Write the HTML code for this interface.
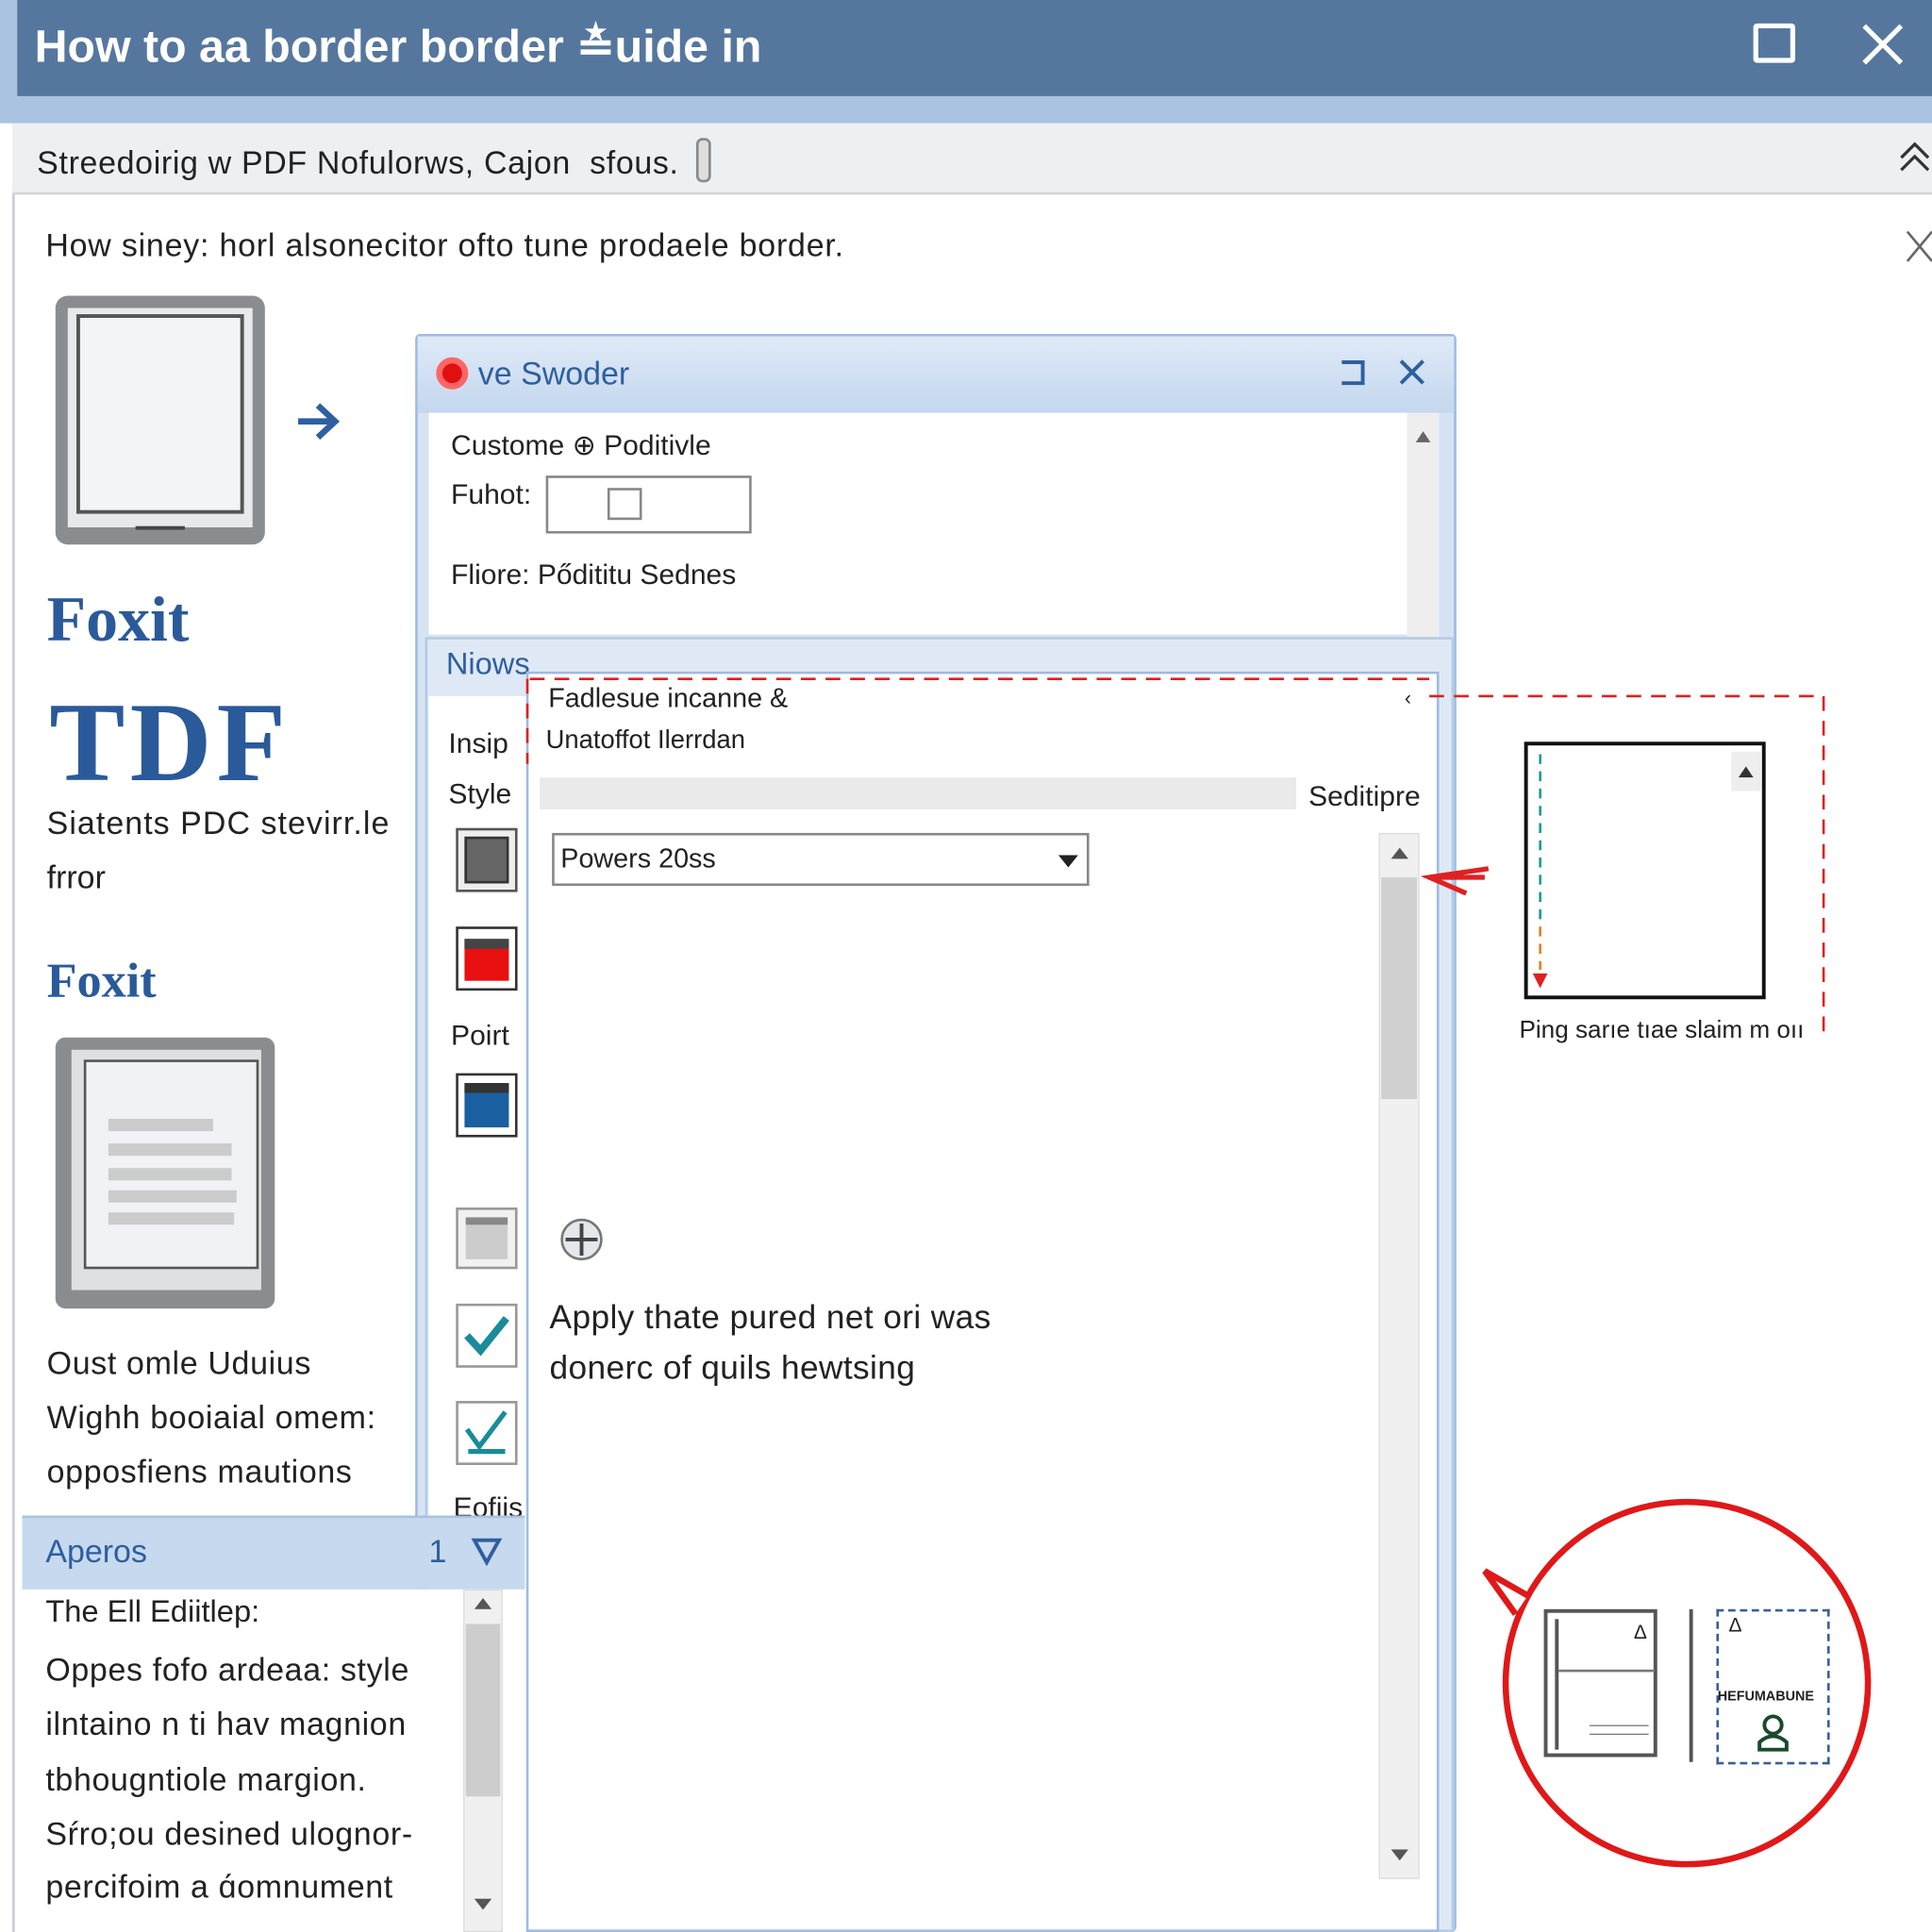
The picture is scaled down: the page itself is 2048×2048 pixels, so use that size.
<!DOCTYPE html>
<html><head><meta charset="utf-8"><style>
*{margin:0;padding:0;box-sizing:border-box}
html,body{width:2048px;height:2048px;overflow:hidden;background:#fff}
#w{width:1568px;height:1568px;transform:scale(1.306122);transform-origin:0 0;position:relative;font-family:"Liberation Sans",sans-serif;color:#222;background:#fff}
.a{position:absolute}
.t{position:absolute;white-space:nowrap;font-size:26px;line-height:1}
</style></head><body><div id="w">
<!-- title -->
<div class="a" style="left:0;top:0;width:1568px;height:100px;background:#a9c3e0"></div>
<div class="a" style="left:14px;top:0;width:1554px;height:78px;background:#55779e"></div>
<div class="t" style="left:28px;top:19px;font-size:37px;font-weight:bold;color:#fff">How to aa border border ≛uide in</div>
<div class="a" style="left:1423px;top:19px;width:34px;height:32px;border:4px solid #fff;border-radius:3px"></div>
<svg class="a" style="left:1510px;top:18px" width="36" height="36"><path d="M3 3L33 33M33 3L3 33" stroke="#fff" stroke-width="4"/></svg>
<div class="a" style="left:10px;top:100px;width:1558px;height:58px;background:#eeeff1;border-bottom:2px solid #d4d6da"></div>
<div class="t" style="left:30px;top:119px;letter-spacing:0.5px">Streedoirig w PDF Nofulorws, Cajon &nbsp;sfous.</div>
<div class="a" style="left:565px;top:112px;width:12px;height:36px;border:2px solid #888;border-radius:5px;background:#ddd"></div>
<svg class="a" style="left:1540px;top:112px" width="28" height="30"><path d="M3 16L14 5L25 16M3 26L14 15L25 26" stroke="#333" stroke-width="2.5" fill="none"/></svg>
<div class="a" style="left:10px;top:158px;width:2px;height:1410px;background:#c8ccd2"></div>
<div class="t" style="left:37px;top:186px;letter-spacing:0.6px">How siney: horl alsonecitor ofto tune prodaele border.</div>
<svg class="a" style="left:1545px;top:185px" width="23" height="32"><path d="M3 3L23 27M23 3L3 27" stroke="#666" stroke-width="2"/></svg>
<!-- tablet -->
<div class="a" style="left:45px;top:240px;width:170px;height:202px;background:#8a8c90;border-radius:10px"></div>
<div class="a" style="left:55px;top:250px;width:150px;height:178px;background:#e8e9ec"></div>
<div class="a" style="left:62px;top:255px;width:136px;height:162px;border:3px solid #555;background:#f3f4f6"></div>
<div class="a" style="left:110px;top:427px;width:40px;height:3px;background:#444"></div>
<svg class="a" style="left:238px;top:325px" width="40" height="34"><path d="M4 17H34M20 4L34 17L20 30" stroke="#2e5fa0" stroke-width="5" fill="none"/></svg>
<div class="t" style="left:38px;top:478px;font-family:'Liberation Serif',serif;font-weight:bold;font-size:52px;color:#2a5a9a">Foxit</div>
<div class="t" style="left:40px;top:556px;font-family:'Liberation Serif',serif;font-weight:bold;font-size:92px;color:#2a5a9a;letter-spacing:4px">TDF</div>
<div class="t" style="left:38px;top:655px;letter-spacing:0.8px">Siatents PDC stevirr.le</div>
<div class="t" style="left:38px;top:699px">frror</div>
<div class="t" style="left:38px;top:776px;font-family:'Liberation Serif',serif;font-weight:bold;font-size:40px;color:#2a5a9a">Foxit</div>
<div class="a" style="left:45px;top:842px;width:178px;height:220px;background:#8a8c90;border-radius:8px"></div>
<div class="a" style="left:58px;top:852px;width:154px;height:195px;background:#dfe0e3"></div>
<div class="a" style="left:68px;top:860px;width:142px;height:170px;border:2px solid #555;background:#f1f2f4"></div>
<div class="a" style="left:88px;top:908px;width:85px;height:10px;background:#ccc"></div>
<div class="a" style="left:88px;top:928px;width:100px;height:10px;background:#ccc"></div>
<div class="a" style="left:88px;top:948px;width:100px;height:10px;background:#ccc"></div>
<div class="a" style="left:88px;top:966px;width:104px;height:10px;background:#ccc"></div>
<div class="a" style="left:88px;top:984px;width:102px;height:10px;background:#ccc"></div>
<div class="t" style="left:38px;top:1093px;letter-spacing:0.5px">Oust omle Uduius</div>
<div class="t" style="left:38px;top:1137px;letter-spacing:0.5px">Wighh booiaial omem:</div>
<div class="t" style="left:38px;top:1181px;letter-spacing:0.5px">opposfiens mautions</div>
<!-- dialog -->
<div class="a" style="left:337px;top:271px;width:845px;height:1297px;background:#d6e3f2;border:2px solid #9fbbe0;border-radius:4px"></div>
<div class="a" style="left:339px;top:273px;width:841px;height:62px;background:linear-gradient(#dfeaf7,#c4d7ee)"></div>
<div class="a" style="left:354px;top:290px;width:26px;height:26px;border-radius:50%;background:#e01010;border:5px solid #f66"></div>
<div class="t" style="left:388px;top:290px;color:#2e5fa0">ve Swoder</div>
<svg class="a" style="left:1086px;top:290px" width="24" height="24"><path d="M3 4H20V21H3" stroke="#2e5fa0" stroke-width="3" fill="none"/></svg>
<svg class="a" style="left:1134px;top:290px" width="24" height="24"><path d="M3 3L21 21M21 3L3 21" stroke="#2e5fa0" stroke-width="3"/></svg>
<div class="a" style="left:348px;top:335px;width:794px;height:180px;background:#fff"></div>
<div class="a" style="left:1142px;top:335px;width:26px;height:182px;background:#eee"></div>
<svg class="a" style="left:1148px;top:348px" width="14" height="12"><path d="M1 11L7 2L13 11Z" fill="#666"/></svg>
<div class="t" style="left:366px;top:350px;font-size:23px">Custome ⊕ Poditivle</div>
<div class="t" style="left:366px;top:390px;font-size:23px">Fuhot:</div>
<div class="a" style="left:443px;top:386px;width:167px;height:47px;border:2px solid #888;background:#fff"></div>
<div class="a" style="left:493px;top:396px;width:28px;height:26px;border:2px solid #888"></div>
<div class="t" style="left:366px;top:455px;font-size:23px">Fliore: Pődititu Sednes</div>
<div class="a" style="left:345px;top:517px;width:835px;height:1051px;background:#dfe9f5;border:2px solid #b5cbe6"></div>
<div class="t" style="left:362px;top:527px;color:#2e5fa0;font-size:25px">Niows</div>
<div class="a" style="left:348px;top:565px;width:80px;height:1003px;background:#fff"></div>
<div class="t" style="left:364px;top:592px;font-size:23px">Insip</div>
<div class="t" style="left:364px;top:633px;font-size:23px">Style</div>
<div class="a" style="left:370px;top:672px;width:50px;height:52px;border:2px solid #555;background:#eee"></div>
<div class="a" style="left:377px;top:679px;width:36px;height:38px;background:#666;border:2px solid #333"></div>
<div class="a" style="left:370px;top:752px;width:50px;height:52px;border:2px solid #333;background:#fff"></div>
<div class="a" style="left:377px;top:762px;width:36px;height:34px;background:#e81010;border-top:8px solid #444"></div>
<div class="t" style="left:366px;top:829px;font-size:23px">Poirt</div>
<div class="a" style="left:370px;top:871px;width:50px;height:52px;border:2px solid #333;background:#fff"></div>
<div class="a" style="left:377px;top:879px;width:36px;height:36px;background:#1a5fa0;border-top:8px solid #333"></div>
<div class="a" style="left:370px;top:980px;width:50px;height:50px;border:2px solid #999;background:#f1f1f1"></div>
<div class="a" style="left:378px;top:988px;width:34px;height:34px;background:#ccc;border-top:6px solid #888"></div>
<div class="a" style="left:370px;top:1058px;width:50px;height:52px;border:2px solid #999;background:#fff"></div>
<svg class="a" style="left:374px;top:1064px" width="42" height="40"><path d="M5 20L16 32L37 6" stroke="#1a8b9a" stroke-width="6" fill="none"/></svg>
<div class="a" style="left:370px;top:1137px;width:50px;height:52px;border:2px solid #999;background:#fff"></div>
<svg class="a" style="left:374px;top:1142px" width="42" height="42"><path d="M5 18L15 32L36 4M6 36H36" stroke="#1a8b9a" stroke-width="4" fill="none"/></svg>
<div class="t" style="left:368px;top:1212px;font-size:23px">Eofiis</div>
<!-- inner panel -->
<div class="a" style="left:427px;top:545px;width:741px;height:1023px;background:#fff;border:2px solid #9fbbe0"></div>
<svg class="a" style="left:0;top:0" width="1568" height="1568"><path d="M430 551H1160M1160 565H1480V845M428 551V620" stroke="#e02020" stroke-width="2" stroke-dasharray="12 8" fill="none"/><path d="M1208 705L1160 712L1190 725M1160 712L1205 712" stroke="#e02020" stroke-width="4" fill="none"/></svg>
<div class="t" style="left:445px;top:556px;font-size:22px">Fadlesue incanne &amp;</div>
<div class="t" style="left:443px;top:590px;font-size:21px">Unatoffot Ilerrdan</div>
<div class="t" style="left:1140px;top:560px;font-size:16px">‹</div>
<div class="a" style="left:438px;top:631px;width:614px;height:26px;background:#eaeaea"></div>
<div class="t" style="left:1062px;top:635px;font-size:23px">Seditipre</div>
<div class="a" style="left:448px;top:676px;width:436px;height:43px;border:2px solid #888;background:#fff"></div>
<div class="t" style="left:455px;top:686px;font-size:22px">Powers 20ss</div>
<svg class="a" style="left:858px;top:692px" width="18" height="14"><path d="M1 2H17L9 12Z" fill="#222"/></svg>
<div class="a" style="left:1119px;top:676px;width:33px;height:849px;background:#f0f0f0;border:1px solid #ddd"></div>
<div class="a" style="left:1121px;top:712px;width:29px;height:180px;background:#d0d0d0"></div>
<svg class="a" style="left:1128px;top:686px" width="16" height="12"><path d="M1 11L8 2L15 11Z" fill="#555"/></svg>
<svg class="a" style="left:1128px;top:1500px" width="16" height="12"><path d="M1 1L8 10L15 1Z" fill="#555"/></svg>
<svg class="a" style="left:453px;top:987px" width="38" height="38"><circle cx="19" cy="19" r="16" fill="#e5e7eb" stroke="#777" stroke-width="2"/><path d="M19 6V32M6 19H32" stroke="#444" stroke-width="3"/></svg>
<div class="t" style="left:446px;top:1056px;font-size:27px;letter-spacing:0.3px">Apply thate pured net ori was</div>
<div class="t" style="left:446px;top:1097px;font-size:27px;letter-spacing:0.3px">donerc of quils hewtsing</div>
<!-- bottom-left panel (over dialog) -->
<div class="a" style="left:18px;top:1230px;width:408px;height:60px;background:#c7d9ee;border-top:2px solid #a9c3e0"></div>
<div class="a" style="left:18px;top:1290px;width:408px;height:278px;background:#fff"></div>
<div class="t" style="left:37px;top:1246px;color:#2e5fa0">Aperos</div>
<div class="t" style="left:348px;top:1246px;color:#2e5fa0">1</div>
<svg class="a" style="left:382px;top:1247px" width="26" height="24"><path d="M3 3H23L13 21Z" stroke="#2e5fa0" stroke-width="3" fill="none"/></svg>
<div class="t" style="left:37px;top:1296px;font-size:25px">The Ell Ediitlep:</div>
<div class="t" style="left:37px;top:1342px;letter-spacing:0.5px">Oppes fofo ardeaa: style</div>
<div class="t" style="left:37px;top:1386px;letter-spacing:0.5px">ilntaino n ti hav magnion</div>
<div class="t" style="left:37px;top:1431px;letter-spacing:0.5px">tbhougntiole margion.</div>
<div class="t" style="left:37px;top:1475px;letter-spacing:0.5px">Sŕro;ou desined ulognor-</div>
<div class="t" style="left:37px;top:1518px;letter-spacing:0.5px">percifoim a ɑ́omnument</div>
<div class="a" style="left:376px;top:1290px;width:32px;height:278px;background:#f0f0f0;border:1px solid #ddd"></div>
<div class="a" style="left:378px;top:1318px;width:28px;height:140px;background:#cdcdcd"></div>
<svg class="a" style="left:384px;top:1295px" width="16" height="12"><path d="M1 11L8 2L15 11Z" fill="#555"/></svg>
<svg class="a" style="left:384px;top:1540px" width="16" height="12"><path d="M1 1L8 10L15 1Z" fill="#555"/></svg>
<!-- right preview -->
<div class="a" style="left:1237px;top:602px;width:196px;height:209px;border:3px solid #111;background:#fff"></div>
<div class="a" style="left:1405px;top:610px;width:24px;height:32px;background:#eee"></div>
<svg class="a" style="left:1410px;top:620px" width="14" height="12"><path d="M1 11L7 2L13 11Z" fill="#333"/></svg>
<svg class="a" style="left:1240px;top:612px" width="20" height="195"><path d="M10 0V140" stroke="#1a9a9a" stroke-width="2" stroke-dasharray="8 6"/><path d="M10 140V175" stroke="#e08020" stroke-width="2" stroke-dasharray="8 6"/><path d="M4 178L10 190L16 178Z" fill="#e02020"/></svg>
<div class="t" style="left:1233px;top:826px;font-size:20px">Ping sarıe tıae slaim m oıı</div>
<svg class="a" style="left:1200px;top:1215px" width="330" height="310"><circle cx="169" cy="151" r="147" fill="#fff" stroke="#e01818" stroke-width="5"/><path d="M40 80L5 60L30 95" fill="#fff" stroke="#e01818" stroke-width="5"/></svg>
<div class="a" style="left:1253px;top:1306px;width:92px;height:120px;border:3px solid #555;background:#fff"></div>
<div class="a" style="left:1262px;top:1314px;width:3px;height:106px;background:#555"></div>
<div class="a" style="left:1265px;top:1355px;width:78px;height:2px;background:#777"></div>
<div class="t" style="left:1326px;top:1318px;font-size:16px">Δ</div>
<div class="a" style="left:1290px;top:1400px;width:48px;height:8px;border-top:1px solid #777;border-bottom:1px solid #777"></div>
<div class="a" style="left:1371px;top:1306px;width:3px;height:124px;background:#555"></div>
<div class="a" style="left:1393px;top:1306px;width:92px;height:126px;border:2px dashed #3a5f9a;background:#fff"></div>
<div class="t" style="left:1403px;top:1312px;font-size:16px">Δ</div>
<div class="t" style="left:1394px;top:1372px;font-size:11px;font-weight:bold">HEFUMABUNE</div>
<svg class="a" style="left:1425px;top:1390px" width="28" height="32"><circle cx="14" cy="10" r="7" fill="none" stroke="#1a4a2a" stroke-width="3"/><path d="M3 30V24Q14 14 25 24V30Z" fill="none" stroke="#1a4a2a" stroke-width="3"/></svg>
</div></body></html>
